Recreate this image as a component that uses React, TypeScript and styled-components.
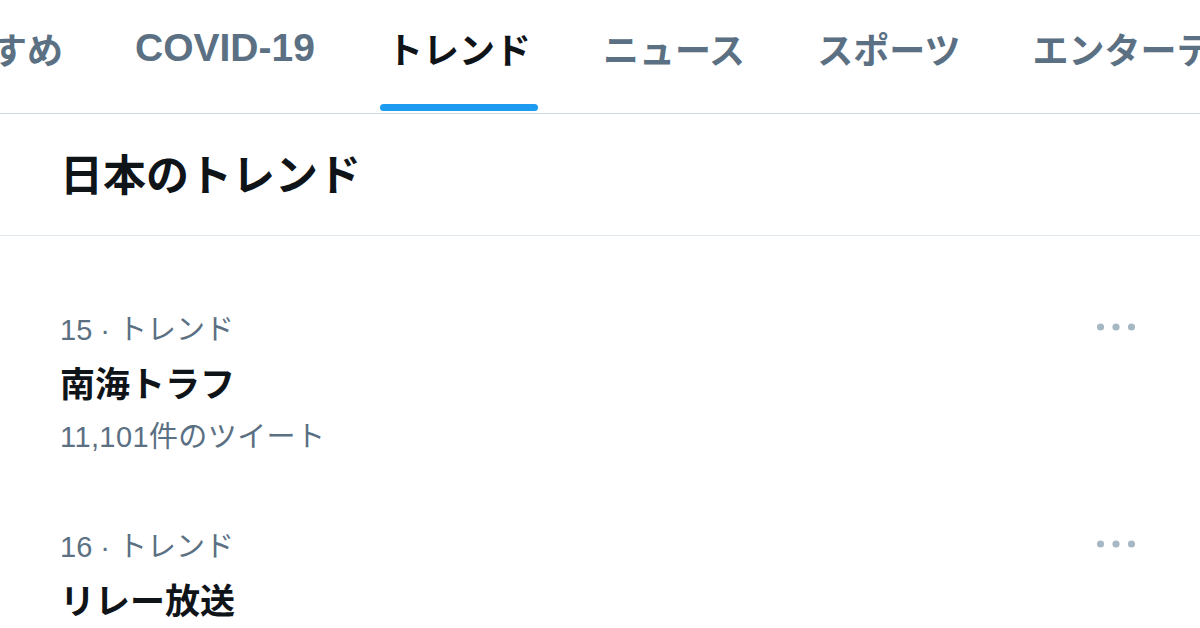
import React from "react";
import styled, { createGlobalStyle } from "styled-components";

const GlobalStyle = createGlobalStyle`
  html, body {
    margin: 0;
    padding: 0;
    background: #ffffff;
  }
  body {
    font-family: "Liberation Sans", "Noto Sans CJK JP", sans-serif;
    -webkit-font-smoothing: antialiased;
  }
`;

const Page = styled.div`
  width: 1200px;
  height: 628px;
  overflow: hidden;
  background: #ffffff;
`;

const TabBar = styled.nav`
  display: flex;
  height: 113px;
  border-bottom: 1px solid #cfd9de;
  overflow: hidden;
`;

const TabStrip = styled.div`
  display: flex;
  margin-left: -117px;
  white-space: nowrap;
`;

const Tab = styled.div<{ $active?: boolean }>`
  position: relative;
  display: flex;
  align-items: center;
  height: 113px;
  padding: 0 36px 18px;
  box-sizing: border-box;
  font-size: 36px;
  font-weight: 700;
  color: ${(p) => (p.$active ? "#0f1419" : "#5b7083")};
`;

const LatinLabel = styled.span`
  font-size: 39px;
`;

const Indicator = styled.span`
  position: absolute;
  left: 29px;
  right: 29px;
  bottom: 2px;
  height: 7px;
  border-radius: 9999px;
  background: #1d9bf0;
`;

const Header = styled.header`
  display: flex;
  align-items: center;
  height: 122px;
  box-sizing: border-box;
  padding: 0 0 6px 60px;
  border-bottom: 1px solid #e1e8ed;
  font-size: 43px;
  font-weight: 700;
  color: #0f1419;
`;

const List = styled.div`
  padding-top: 35px;
`;

const Row = styled.div`
  display: flex;
  flex-direction: column;
  padding: 30px 65px 29px 60px;
`;

const MetaLine = styled.div`
  display: flex;
  align-items: center;
  justify-content: space-between;
  height: 52px;
  font-size: 29px;
  color: #5b7083;
`;

const Name = styled.div`
  height: 56px;
  display: flex;
  align-items: center;
  font-size: 35px;
  font-weight: 700;
  color: #0f1419;
`;

const Count = styled.div`
  height: 50px;
  display: flex;
  align-items: center;
  font-size: 29px;
  letter-spacing: 0.4px;
  color: #5b7083;
`;

const MoreIcon = () => (
  <svg width="38" height="8" viewBox="0 0 38 8" aria-hidden="true">
    <circle cx="3.5" cy="4" r="3.6" fill="#a7b8c5" />
    <circle cx="19" cy="4" r="3.6" fill="#a7b8c5" />
    <circle cx="34.5" cy="4" r="3.6" fill="#a7b8c5" />
  </svg>
);

type Trend = { rank: number; name: string; count?: string };

const trends: Trend[] = [
  { rank: 15, name: "南海トラフ", count: "11,101件のツイート" },
  { rank: 16, name: "リレー放送" },
];

export default function App() {
  return (
    <Page>
      <GlobalStyle />
      <TabBar>
        <TabStrip>
          <Tab>おすすめ</Tab>
          <Tab>
            <LatinLabel>COVID-19</LatinLabel>
          </Tab>
          <Tab $active>
            トレンド
            <Indicator />
          </Tab>
          <Tab>ニュース</Tab>
          <Tab>スポーツ</Tab>
          <Tab>エンターテイメント</Tab>
        </TabStrip>
      </TabBar>
      <Header>日本のトレンド</Header>
      <List>
        {trends.map((t) => (
          <Row key={t.rank}>
            <MetaLine>
              <span>{t.rank} · トレンド</span>
              <MoreIcon />
            </MetaLine>
            <Name>{t.name}</Name>
            {t.count && <Count>{t.count}</Count>}
          </Row>
        ))}
      </List>
    </Page>
  );
}
